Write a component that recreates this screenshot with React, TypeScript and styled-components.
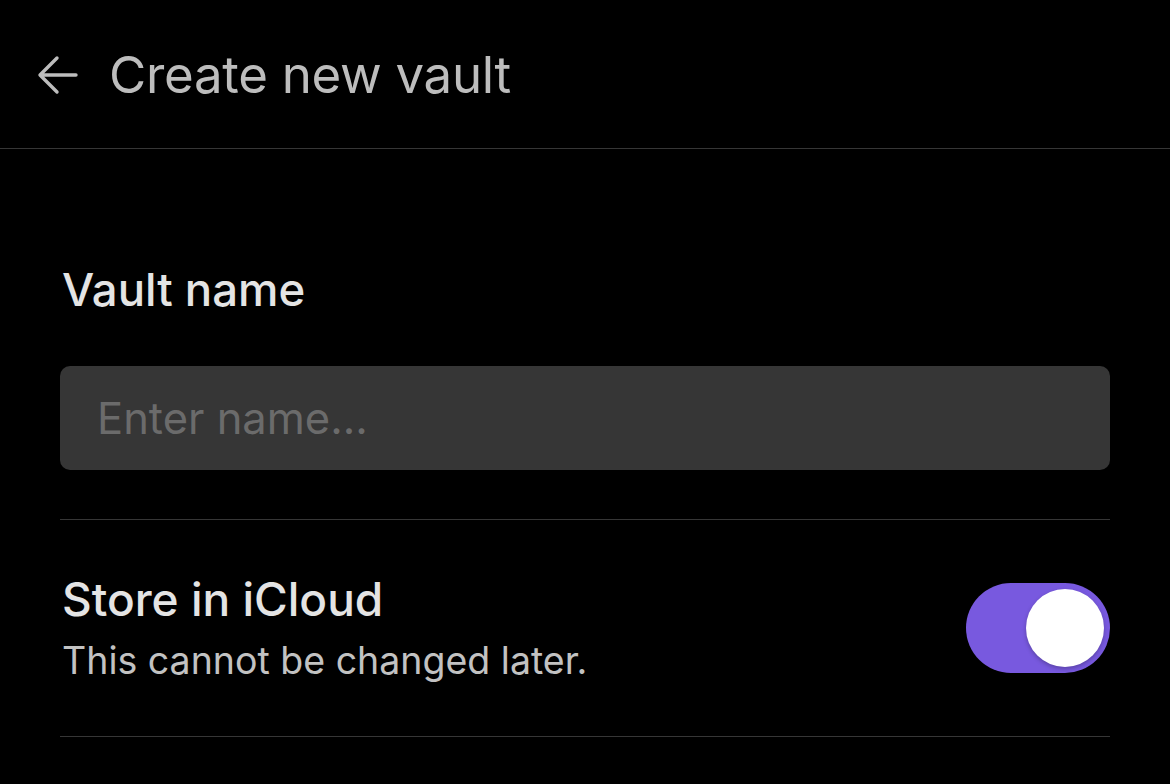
import React, { useState } from "react"
import styled, { createGlobalStyle } from "styled-components"

const GlobalStyle = createGlobalStyle`
  html, body {
    margin: 0;
    padding: 0;
    background: #000;
  }
  body {
    font-family: Inter, "Noto Sans", sans-serif;
    -webkit-font-smoothing: antialiased;
  }
`

const App = () => {
  const [icloud, setIcloud] = useState(true)

  return (
    <Screen>
      <GlobalStyle />
      <Header>
        <BackButton aria-label="Back">
          <svg width="44" height="44" viewBox="0 0 44 44" fill="none">
            <path d="M40 22H5M21 5L4 22l17 17" stroke="#bdbdbd" strokeWidth="3.4" strokeLinecap="round" strokeLinejoin="round" />
          </svg>
        </BackButton>
        <Title>Create new vault</Title>
      </Header>

      <Content>
        <Label>Vault name</Label>
        <NameInput placeholder="Enter name..." />
        <Divider />
        <SettingRow>
          <SettingText>
            <SettingName>Store in iCloud</SettingName>
            <SettingDesc>This cannot be changed later.</SettingDesc>
          </SettingText>
          <Toggle $on={icloud} onClick={() => setIcloud(!icloud)}>
            <Knob $on={icloud} />
          </Toggle>
        </SettingRow>
        <Divider />
      </Content>
    </Screen>
  )
}

export default App


const Screen = styled.div`
  width: 1170px;
  min-height: 784px;
  background: #000;
`
const Header = styled.header`
  height: 148px;
  display: flex;
  align-items: center;
  gap: 29px;
  padding-left: 36px;
  border-bottom: 1px solid #363636;
`
const BackButton = styled.button`
  display: flex;
  padding: 0;
  border: 0;
  background: none;
  margin-top: 2px;
`
const Title = styled.h1`
  margin: 0;
  font-size: 51px;
  font-weight: 400;
  color: #bdbdbd;
  letter-spacing: -0.3px;
`
const Content = styled.main`
  padding: 116px 60px 0;
  display: flex;
  flex-direction: column;
`
const Label = styled.div`
  font-size: 45.5px;
  font-weight: 500;
  color: #e4e4e4;
  line-height: 50px;
  margin-left: 2px;
`
const NameInput = styled.input`
  margin: 51px 0 49px;
  height: 104px;
  box-sizing: border-box;
  border: 0;
  border-radius: 10px;
  background: #363636;
  padding: 0 37px;
  font-family: inherit;
  font-size: 43.5px;
  color: #e4e4e4;
  outline: none;

  &::placeholder {
    color: #6b6b6b;
  }
`
const Divider = styled.hr`
  margin: 0;
  border: 0;
  height: 1px;
  background: #363636;
`
const SettingRow = styled.div`
  display: flex;
  align-items: center;
  justify-content: space-between;
  height: 216px;
`
const SettingText = styled.div`
  display: flex;
  flex-direction: column;
  gap: 14px;
  margin-left: 2px;
`
const SettingName = styled.div`
  font-size: 46px;
  line-height: 52px;
  font-weight: 500;
  color: #e4e4e4;
`
const SettingDesc = styled.div`
  font-size: 37.5px;
  line-height: 44px;
  color: #c2c2c2;
`
const Toggle = styled.button<{ $on: boolean }>`
  position: relative;
  width: 144px;
  height: 90px;
  border: 0;
  padding: 0;
  border-radius: 45px;
  background: ${p => (p.$on ? "#7859df" : "#3a3a3a")};
  cursor: pointer;
`
const Knob = styled.span<{ $on: boolean }>`
  position: absolute;
  top: 6px;
  left: ${p => (p.$on ? "60px" : "6px")};
  width: 78px;
  height: 78px;
  border-radius: 50%;
  background: #fff;
  box-shadow: 0 2px 4px rgba(0, 0, 0, 0.25);
`
